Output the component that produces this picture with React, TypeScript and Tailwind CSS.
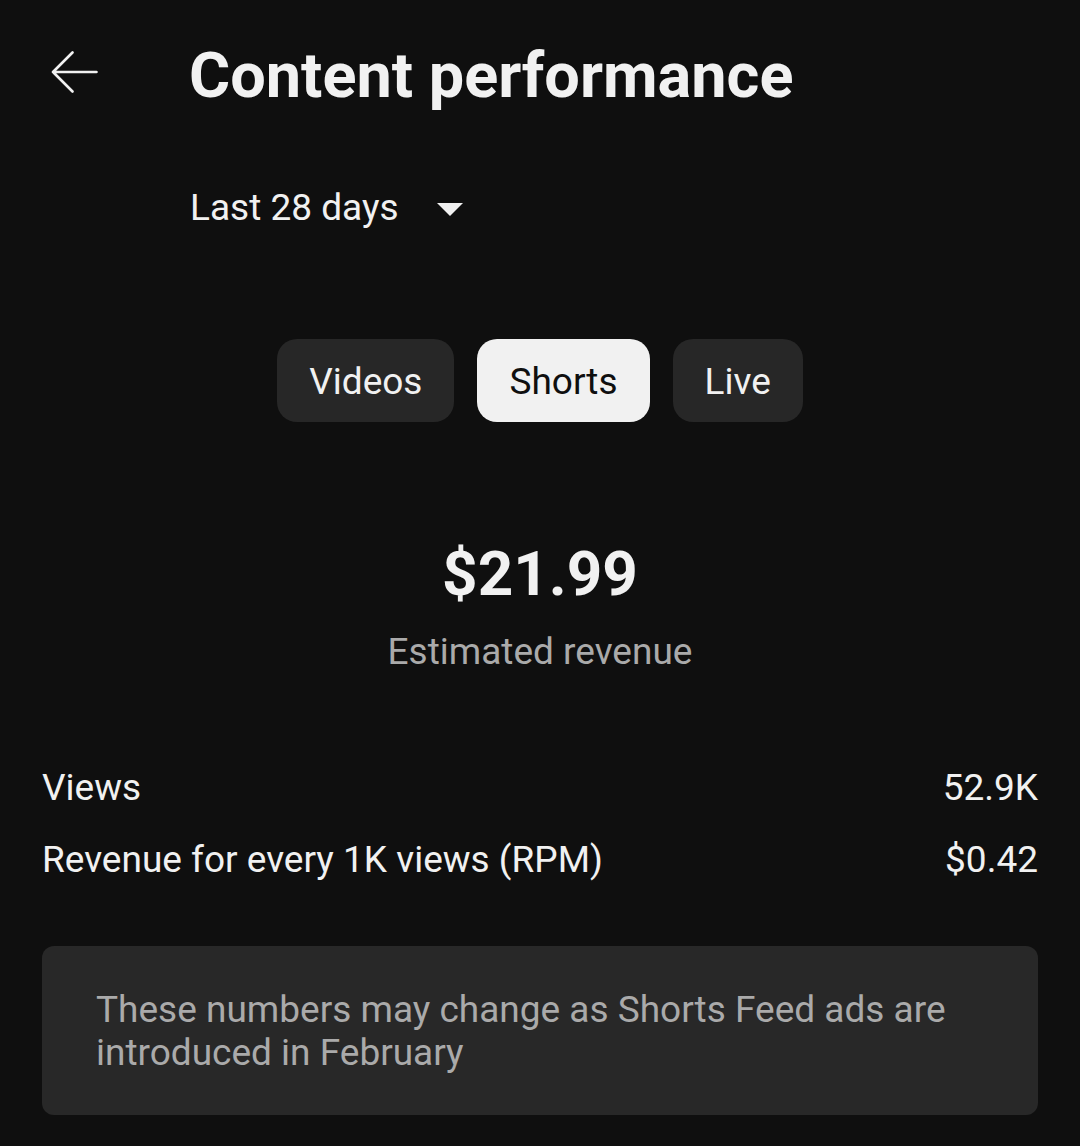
import * as React from 'react';

const tabs = ['Videos', 'Shorts', 'Live'];

const BackArrow = () => (
  <svg width="47" height="42" viewBox="0 0 47 42" fill="none">
    <path
      d="M45.5 21H2M21.5 1.5L2 21l19.5 19.5"
      stroke="#f1f1f1"
      strokeWidth="2.6"
      strokeLinecap="round"
      strokeLinejoin="round"
    />
  </svg>
);

export default function App() {
  const [active, setActive] = React.useState('Shorts');

  return (
    <div
      className="w-[1080px] h-[1146px] bg-[#0f0f0f] text-[#f1f1f1] overflow-hidden"
      style={{ fontFamily: 'Roboto, "Noto Sans", sans-serif' }}
    >
      {/* header */}
      <div className="flex items-start pt-[44px]">
        <div className="w-[189px] pl-[51px] pt-[7px]">
          <BackArrow />
        </div>
        <h1 className="text-[63px] font-bold leading-none h-[63px]">
          Content performance
        </h1>
      </div>

      {/* range picker */}
      <div className="flex items-start pl-[190px] mt-[82px]">
        <span className="text-[37px] leading-none h-[37px]">Last 28 days</span>
        <svg className="ml-[38px] mt-[14px]" width="26" height="13" viewBox="0 0 26 13">
          <path d="M0 0h26L13 13z" fill="#f1f1f1" />
        </svg>
      </div>

      {/* tabs */}
      <div className="flex justify-center gap-[23px] mt-[113px]">
        {tabs.map(tab => (
          <button
            key={tab}
            onClick={() => setActive(tab)}
            className={
              tab === active
                ? 'h-[83px] px-[32px] pt-[2px] rounded-[20px] bg-[#f1f1f1] text-[#0f0f0f] text-[37px]'
                : 'h-[83px] px-[32px] pt-[2px] rounded-[20px] bg-[#272727] text-[#f1f1f1] text-[37px]'
            }
          >
            {tab}
          </button>
        ))}
      </div>

      {/* revenue */}
      <div className="flex flex-col items-center mt-[121px]">
        <div className="text-[62px] font-bold leading-none h-[62px]">$21.99</div>
        <div className="text-[37px] text-[#aaaaaa] mt-[28px] leading-none h-[37px]">
          Estimated revenue
        </div>
      </div>

      {/* metrics */}
      <div className="px-[42px] mt-[99px] flex flex-col gap-[35px] text-[37px] leading-none">
        <div className="flex justify-between h-[37px]">
          <span>Views</span>
          <span>52.9K</span>
        </div>
        <div className="flex justify-between h-[37px]">
          <span>Revenue for every 1K views (RPM)</span>
          <span>$0.42</span>
        </div>
      </div>

      {/* note */}
      <div className="mx-[42px] mt-[68px] h-[169px] rounded-[12px] bg-[#282828] pl-[54px] pr-[40px] pt-[42px]">
        <p className="text-[37px] leading-[43px] text-[#aaaaaa]">
          These numbers may change as Shorts Feed ads are introduced in February
        </p>
      </div>
    </div>
  );
}
